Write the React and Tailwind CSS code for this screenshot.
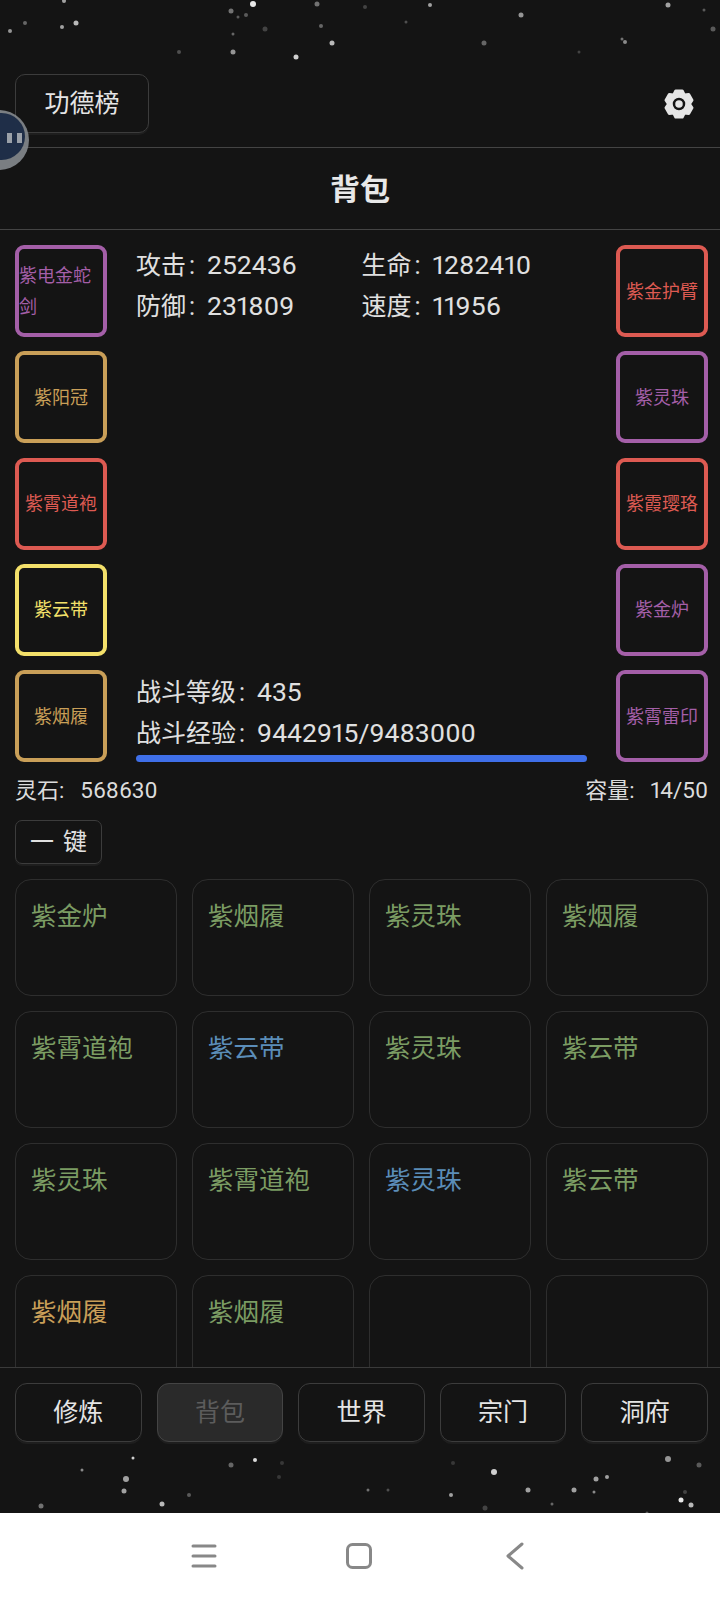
import React from 'react';

const PURPLE = 'border-[#a45fa8] text-[#a45fa8]';
const GOLD = 'border-[#c99f58] text-[#c99f58]';
const RED = 'border-[#dd5a52] text-[#dd5a52]';
const YELLOW = 'border-[#f3e06a] text-[#f3e06a]';

const leftSlots = [
  { name: '紫电金蛇剑', color: PURPLE },
  { name: '紫阳冠', color: GOLD },
  { name: '紫霄道袍', color: RED },
  { name: '紫云带', color: YELLOW },
  { name: '紫烟履', color: GOLD },
];

const rightSlots = [
  { name: '紫金护臂', color: RED },
  { name: '紫灵珠', color: PURPLE },
  { name: '紫霞璎珞', color: RED },
  { name: '紫金炉', color: PURPLE },
  { name: '紫霄雷印', color: PURPLE },
];

const GREEN_TEXT = 'text-[#7b9c63]';
const BLUE_TEXT = 'text-[#5b8db8]';
const ORANGE_TEXT = 'text-[#c99f58]';

const items = [
  { name: '紫金炉', color: GREEN_TEXT },
  { name: '紫烟履', color: GREEN_TEXT },
  { name: '紫灵珠', color: GREEN_TEXT },
  { name: '紫烟履', color: GREEN_TEXT },
  { name: '紫霄道袍', color: GREEN_TEXT },
  { name: '紫云带', color: BLUE_TEXT },
  { name: '紫灵珠', color: GREEN_TEXT },
  { name: '紫云带', color: GREEN_TEXT },
  { name: '紫灵珠', color: GREEN_TEXT },
  { name: '紫霄道袍', color: GREEN_TEXT },
  { name: '紫灵珠', color: BLUE_TEXT },
  { name: '紫云带', color: GREEN_TEXT },
  { name: '紫烟履', color: ORANGE_TEXT },
  { name: '紫烟履', color: GREEN_TEXT },
  { name: '', color: '' },
  { name: '', color: '' },
];

const tabs = ['修炼', '背包', '世界', '宗门', '洞府'];

// x, y, radius, opacity
const topStars = [
  [64, 1, 2, 0.6], [253, 4, 3, 0.9], [317, 4, 2.5, 0.4], [231, 11, 2.5, 0.4], [246, 15, 2, 0.3],
  [238, 17, 1.5, 0.3], [10, 31, 2, 0.55], [25, 23, 2, 0.35], [62, 27, 2, 0.6], [76, 23, 2.5, 0.7],
  [321, 26, 2, 0.35], [265, 29, 2.5, 0.2], [233, 34, 1.5, 0.35], [332, 43, 2.5, 0.7], [233, 52, 2.5, 0.55],
  [179, 52, 2, 0.25], [296, 57, 2.5, 0.8], [430, 5, 2, 0.6], [521, 15, 2.5, 0.55], [668, 5, 2.5, 0.6],
  [704, 10, 1.5, 0.3], [713, 29, 2.5, 0.3], [484, 43, 2.5, 0.35], [625, 42, 2, 0.5], [622, 39, 1.5, 0.4],
  [579, 52, 1.5, 0.2], [406, 22, 1.5, 0.25], [365, 7, 2, 0.2],
];

const bottomStars = [
  [133, 16, 1.5, 0.8], [82, 28, 1.5, 0.5], [126, 37, 3, 0.6], [124, 49, 2.5, 0.6], [41, 64, 2.5, 0.4],
  [162, 62, 2.5, 0.7], [189, 53, 2, 0.3], [231, 23, 2.5, 0.35], [255, 18, 2, 0.85], [282, 21, 2, 0.15],
  [279, 35, 2, 0.15], [494, 30, 3, 0.8], [453, 21, 2, 0.15], [368, 48, 1.5, 0.4], [388, 48, 1.5, 0.25],
  [451, 53, 2, 0.6], [528, 48, 2.5, 0.6], [574, 48, 2.5, 0.6], [596, 37, 2.5, 0.6], [607, 35, 2, 0.6],
  [594, 50, 1.5, 0.5], [552, 62, 1.5, 0.35], [485, 66, 2.5, 0.2], [668, 17, 3, 0.55], [699, 23, 2.5, 0.3],
  [681, 58, 2.5, 0.9], [691, 63, 2.5, 0.7], [685, 50, 2, 0.2], [647, 71, 1.5, 0.3],
];

const Stars = ({ stars, height }) => (
  <svg className="absolute left-0 top-0 blur-[0.6px]" width="720" height={height}>
    {stars.map(([x, y, r, o], i) => (
      <circle key={i} cx={x} cy={y} r={r} fill="#fff" opacity={o} />
    ))}
  </svg>
);

// six rounded teeth, one pointing straight up
const gearPoints = [0, 60, 120, 180, 240, 300]
  .flatMap((a) => [
    [a - 14, 13.5],
    [a + 14, 13.5],
    [a + 30, 10.5],
  ])
  .map(([a, r]) => {
    const rad = ((a - 90) * Math.PI) / 180;
    return `${(16 + r * Math.cos(rad)).toFixed(2)},${(16 + r * Math.sin(rad)).toFixed(2)}`;
  })
  .join(' ');

const Gear = () => (
  <svg width="32" height="32" viewBox="0 0 32 32">
    <polygon points={gearPoints} fill="#e5e5e5" stroke="#e5e5e5" strokeWidth="3" strokeLinejoin="round" />
    <circle cx="16" cy="16" r="5" fill="none" stroke="#141414" strokeWidth="2.5" />
  </svg>
);

const Slot = ({ name, color }) => (
  <div
    className={`flex h-[92px] w-[92px] items-center rounded-[9px] border-[4px] text-[18px] leading-[31px] ${color} ${
      name.length > 4 ? 'justify-start' : 'justify-center'
    }`}
  >
    {name}
  </div>
);

const Stat = ({ label, value }) => (
  <div className="text-[25px] leading-[40px] text-[#e0e0e0]">
    {label}
    <span className="ml-[3px] mr-[12px]">:</span>
    <span className="text-[26.5px] proportional-nums">{value}</span>
  </div>
);

const App = () => {
  return (
    <div className="flex h-[1600px] w-[720px] flex-col overflow-hidden bg-[#141414] font-['Roboto','Noto_Sans_CJK_SC',sans-serif]">
      {/* header */}
      <div className="relative h-[148px] shrink-0 border-b border-[#444]">
        <Stars stars={topStars} height={147} />
        <div className="relative flex items-center justify-between pl-[15px] pr-[25px] pt-[74px]">
          <div className="flex h-[59px] w-[134px] items-center justify-center rounded-[10px] border border-[#3c3c3c] text-[25px] text-[#e5e5e5] shadow-[0_2px_0_#1e1e1e]">
            功德榜
          </div>
          <Gear />
        </div>
      </div>

      {/* floating ball */}
      <div className="absolute left-[-31px] top-[110px] z-10 h-[60px] w-[60px] rounded-full bg-[#85898e]/90">
        <div className="absolute left-[9px] top-[3px] h-[47px] w-[47px] rounded-full bg-[#1a2a44]/95" />
        <div className="absolute left-[38px] top-[23px] flex gap-[5px]">
          <span className="h-[10px] w-[5px] bg-[#9aa0a8]" />
          <span className="h-[10px] w-[5px] bg-[#9aa0a8]" />
        </div>
      </div>

      <div className="flex h-[82px] shrink-0 items-center justify-center border-b border-[#444] pt-[1px] text-[30px] font-bold text-[#e8e8e8]">
        背包
      </div>

      {/* equipment */}
      <div className="mt-[15px] flex h-[517px] shrink-0 justify-between pl-[15px] pr-[12px]">
        <div className="flex flex-col justify-between">
          {leftSlots.map((s) => (
            <Slot key={s.name} {...s} />
          ))}
        </div>
        <div className="flex w-[451px] flex-col justify-between">
          <div className="grid grid-cols-2">
            <Stat label="攻击" value="252436" />
            <Stat label="生命" value="1282410" />
            <Stat label="防御" value="231809" />
            <Stat label="速度" value="11956" />
          </div>
          <div>
            <Stat label="战斗等级" value="435" />
            <Stat label="战斗经验" value="9442915/9483000" />
            <div className="mt-[1px] h-[7px] rounded-full bg-[#3f6fe8]" />
          </div>
        </div>
        <div className="flex flex-col justify-between">
          {rightSlots.map((s) => (
            <Slot key={s.name} {...s} />
          ))}
        </div>
      </div>

      <div className="mt-[13px] flex justify-between pl-[15px] pr-[12px] text-[22px] leading-[30px] text-[#dcdcdc]">
        <span>
          灵石:<span className="ml-[16px] text-[22.5px] proportional-nums">568630</span>
        </span>
        <span>
          容量:<span className="ml-[16px] text-[22.5px] proportional-nums">14/50</span>
        </span>
      </div>

      <div className="px-[15px] pt-[14px]">
        <div className="flex h-[44px] w-[87px] items-center justify-center gap-[9px] rounded-[7px] border border-[#3c3c3c] text-[24px] text-[#e0e0e0] shadow-[0_2px_0_#1e1e1e]">
          <span>一</span>
          <span>键</span>
        </div>
      </div>

      {/* bag grid */}
      <div className="min-h-0 flex-1 overflow-hidden pl-[15px] pr-[12px] pt-[15px]">
        <div className="grid grid-cols-4 gap-[15px]">
          {items.map((item, i) => (
            <div
              key={i}
              className={`h-[117px] rounded-[16px] border border-[#2e2e2e] px-[15px] pt-[16px] text-[25.5px] leading-[40px] ${item.color}`}
            >
              {item.name}
            </div>
          ))}
        </div>
      </div>

      {/* tabs */}
      <div className="h-[146px] shrink-0 border-t border-[#3a3a3a]">
        <div className="flex gap-[15px] pl-[15px] pr-[12px] pt-[15px]">
          {tabs.map((tab) => (
            <div
              key={tab}
              className={`flex h-[59px] flex-1 items-center justify-center rounded-[12px] border text-[25px] shadow-[0_2px_0_#1e1e1e] ${
                tab === '背包' ? 'border-[#444] bg-[#2a2a2a] text-[#5c5c5c]' : 'border-[#3c3c3c] text-[#e5e5e5]'
              }`}
            >
              {tab}
            </div>
          ))}
        </div>
        <div className="relative h-[72px]">
          <Stars stars={bottomStars} height={72} />
        </div>
      </div>

      {/* android nav */}
      <div className="flex h-[87px] shrink-0 items-center bg-white pb-[2px] pl-[191px] text-[#888]">
        <svg width="26" height="24" viewBox="0 0 26 24" fill="none" stroke="currentColor" strokeWidth="3" strokeLinecap="round">
          <path d="M2 2h22M2 12h22M2 22h22" />
        </svg>
        <svg className="ml-[129px]" width="26" height="26" viewBox="0 0 26 26" fill="none" stroke="currentColor" strokeWidth="3">
          <rect x="1.5" y="1.5" width="23" height="23" rx="5" />
        </svg>
        <svg className="ml-[134px]" width="18" height="28" viewBox="0 0 18 28" fill="none" stroke="currentColor" strokeWidth="3" strokeLinecap="round" strokeLinejoin="round">
          <path d="M16 2 2 14l14 12" />
        </svg>
      </div>
    </div>
  );
};

export default App;
